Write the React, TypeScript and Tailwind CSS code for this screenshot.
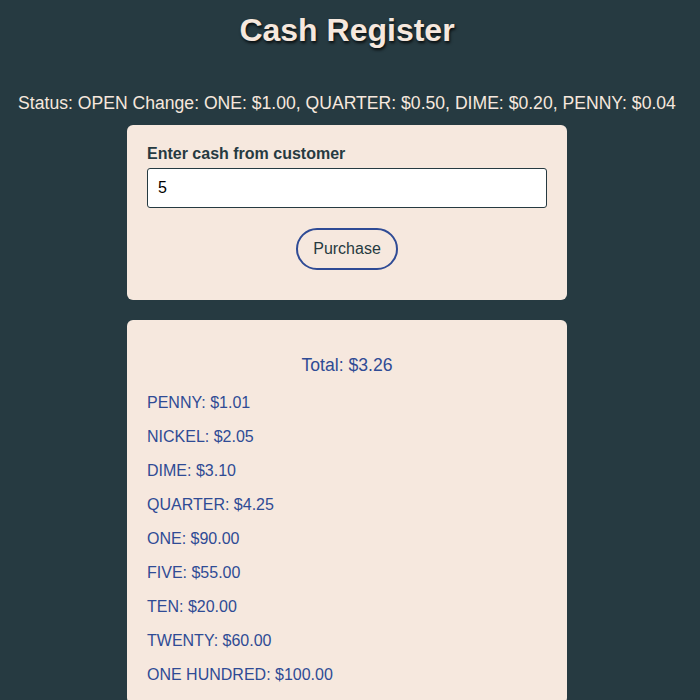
export default function App() {
  const items = [
    ["PENNY", "$1.01"],
    ["NICKEL", "$2.05"],
    ["DIME", "$3.10"],
    ["QUARTER", "$4.25"],
    ["ONE", "$90.00"],
    ["FIVE", "$55.00"],
    ["TEN", "$20.00"],
    ["TWENTY", "$60.00"],
    ["ONE HUNDRED", "$100.00"],
  ];
  return (
    <div
      className="min-h-[700px] bg-[#263a41] flex flex-col items-center pb-10 pr-[6px]"
      style={{ fontFamily: '"Liberation Sans", Arial, sans-serif' }}
    >
      <h1 className="text-[32px] leading-[37px] font-bold text-[#f6e8de] mt-[12px] [text-shadow:1px_2px_3px_rgba(0,0,0,0.8)]">
        Cash Register
      </h1>
      <p className="text-[17.6px] leading-[20px] text-[#f6e8de] mt-[44px]">
        Status: OPEN Change: ONE: $1.00, QUARTER: $0.50, DIME: $0.20, PENNY: $0.04
      </p>
      <div className="w-[440px] bg-[#f6e8de] rounded-[6px] mt-[12px] px-5 pt-[19px] pb-[30px] flex flex-col">
        <label className="text-[16px] leading-[19px] font-bold text-[#263a41]">
          Enter cash from customer
        </label>
        <input
          readOnly
          value="5"
          className="mt-[5px] h-[40px] w-full bg-white border border-[#263a41] rounded-[3px] px-[10px] text-[16px] text-black outline-none"
        />
        <div className="flex justify-center mt-[20px]">
          <button className="w-[102px] h-[42px] rounded-full border-2 border-[#2f4b95] text-[16px] text-[#263a41] bg-transparent">
            Purchase
          </button>
        </div>
      </div>
      <div className="w-[440px] bg-[#f6e8de] rounded-[6px] mt-[20px] px-5 pt-[35px] pb-[20px] flex flex-col text-[#2f4b95]">
        <p className="text-[17.6px] leading-[20px] text-center">Total: $3.26</p>
        <div className="flex flex-col mt-[18px] gap-[15px]">
          {items.map(([n, v]) => (
            <p key={n} className="text-[16px] leading-[19px]">
              {n}: {v}
            </p>
          ))}
        </div>
      </div>
    </div>
  );
}
